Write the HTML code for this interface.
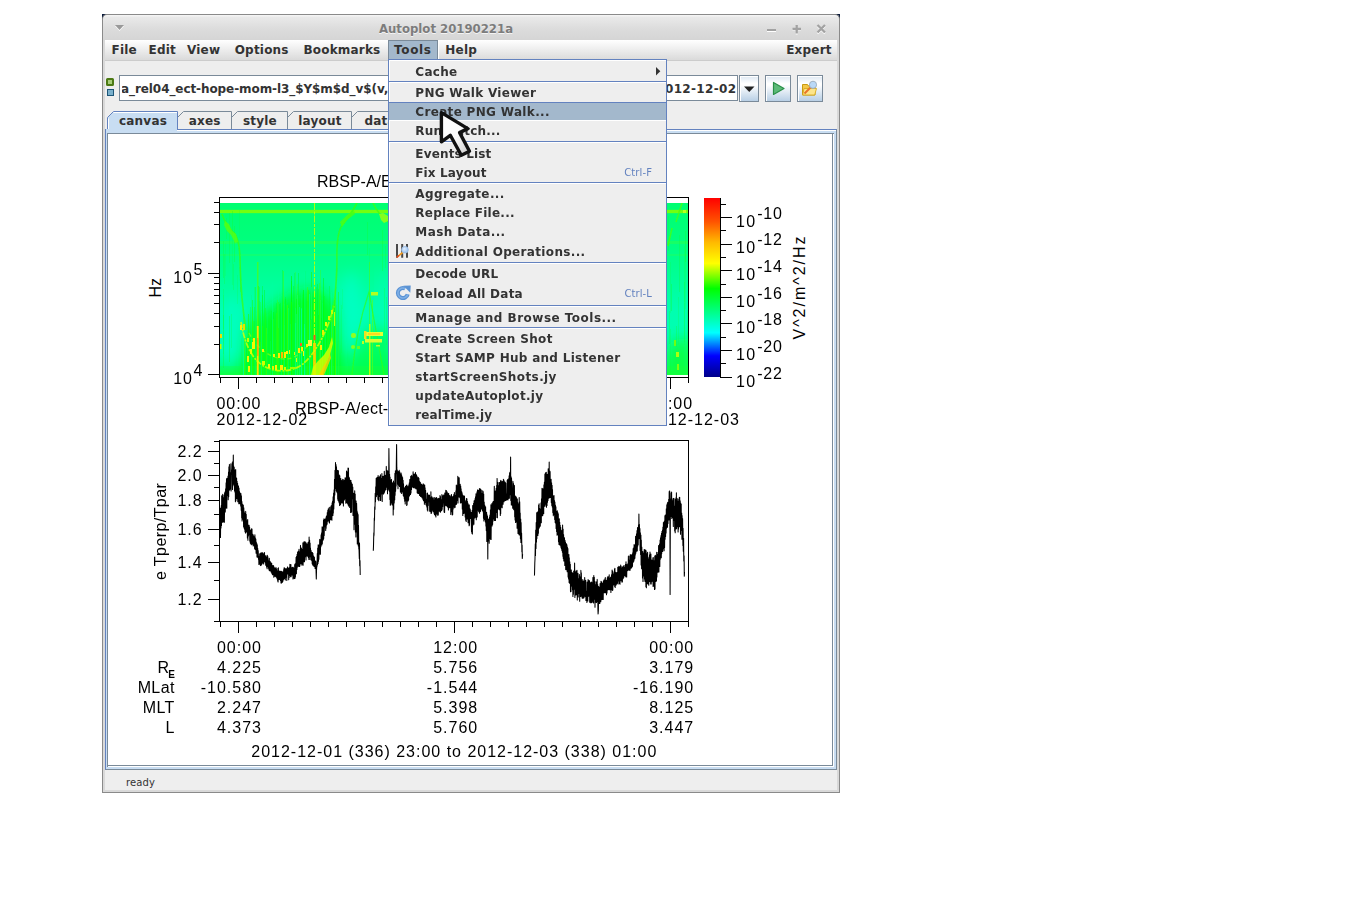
<!DOCTYPE html>
<html lang="en"><head><meta charset="utf-8"><title>Autoplot 20190221a</title>
<style>
*{box-sizing:border-box;margin:0;padding:0}
html,body{width:1345px;height:916px;overflow:hidden;background:#fff}
body{position:relative;font-family:"DejaVu Sans","Liberation Sans",sans-serif;font-size:12px;color:#333}
.a{position:absolute}
.b{font-weight:bold;letter-spacing:.2px;white-space:nowrap;line-height:14px;height:14px}
.p{font-family:"Liberation Sans",sans-serif;font-size:17px;letter-spacing:.42px;color:#000;white-space:nowrap;line-height:20px;height:20px}
.btn{border:1px solid #7a8a99;background:linear-gradient(#dde8f3 0,#fff 30%,#fff 36%,#b8cfe5 100%);box-shadow:inset 1px 1px 0 #fff}
</style></head>
<body>
<div class="a" style="left:102px;top:14px;width:738px;height:779px;background:#8a8a8a;border-radius:5px 5px 0 0"></div>
<div class="a" style="left:103px;top:15px;width:736px;height:777px;background:#d9d9d9;border-radius:3px 3px 0 0"></div>
<svg class="a" style="left:102px;top:14px" width="738" height="5"><path d="M0 0h5l-5 5z M738 0h-5l5 5z" fill="#0b1a3a"/></svg>
<div class="a" style="left:102px;top:14px;width:738px;height:26px;border-radius:5px 5px 0 0;border:1px solid #8a8a8a;border-bottom:0;background:linear-gradient(#f7f7f7 0,#e9e9e9 10%,#dcdcdc 55%,#d5d5d5 100%)"></div>
<div class="a" style="left:103px;top:21px;width:686px;text-align:center;font-family:'DejaVu Sans Condensed','DejaVu Sans',sans-serif;font-stretch:condensed;font-weight:bold;font-size:13px;line-height:16px;color:#7c7c7c;text-shadow:0 1px 0 #f4f4f4;white-space:nowrap">Autoplot 20190221a</div>
<svg class="a" style="left:111.400px;top:20px" width="20" height="16"><path d="M4 6h9l-4.5 5z" fill="#fff"/><path d="M4 5h9l-4.5 5z" fill="#999"/></svg>
<svg class="a" style="left:760px;top:20px" width="72" height="16"><g stroke="#fff" stroke-width="2" fill="none"><path d="M7 11h9"/><path d="M32.500 10h8.500M36.700 6v8.500"/><path d="M57.500 6l7.500 7.500M65 6l-7.500 7.500"/></g><g stroke="#a2a2a2" stroke-width="2" fill="none"><path d="M7 10h9"/><path d="M32.500 9h8.500M36.700 5v8.500" stroke-width="2.300"/><path d="M57.500 5l7.500 7.500M65 5l-7.500 7.500" stroke-width="2.300"/></g></svg>
<div class="a" style="left:105px;top:40px;width:732px;height:750px;background:#eee"></div>
<div class="a" style="left:105px;top:40px;width:732px;height:20px;background:linear-gradient(#fff,#dadada)"></div>
<div class="a" style="left:105px;top:60px;width:732px;height:1px;background:#ccc"></div>
<div class="a" style="left:388px;top:40px;width:50px;height:20px;background:#a3b8cc;border:1px solid #7a8a99;border-bottom:0"></div><div class="a" style="left:438px;top:40px;width:1px;height:19px;background:#fff"></div>
<div class="a b" style="left:111.5px;top:43px">File</div>
<div class="a b" style="left:148.5px;top:43px">Edit</div>
<div class="a b" style="left:187px;top:43px">View</div>
<div class="a b" style="left:234.7px;top:43px">Options</div>
<div class="a b" style="left:303.4px;top:43px">Bookmarks</div>
<div class="a b" style="left:394px;top:43px;letter-spacing:.65px">Tools</div>
<div class="a b" style="left:445.3px;top:43px">Help</div>
<div class="a b" style="left:786.2px;top:43px">Expert</div>
<div class="a" style="left:106px;top:78px;width:8px;height:8px;border-radius:1.500px;border:2px solid #4c7a14;background:#a7cd78"></div>
<div class="a" style="left:107px;top:89px;width:7px;height:7px;border:1px solid #1d5678;background:#7ab0cc"></div>
<div class="a" style="left:119px;top:75px;width:619px;height:26px;border:1px solid #7a8a99;background:#fff"><div class="a" style="left:2px;top:0;width:614px;height:24px;overflow:hidden"><div class="a b" style="left:-1px;top:6px;letter-spacing:-.08px">a_rel04_ect-hope-mom-l3_$Y$m$d_v$(v,</div><div class="a b" style="right:-.5px;top:6px;background:#fff;letter-spacing:.35px">2012-12-02</div></div></div>
<div class="a btn" style="left:739px;top:75px;width:20px;height:27px"><svg class="a" style="left:0;top:0" width="18" height="25"><path d="M4 10.500h10.500l-5.250 5.500z" fill="#222"/></svg></div>
<div class="a btn" style="left:765px;top:75px;width:26px;height:27px"><svg class="a" style="left:0;top:0" width="24" height="25"><path d="M7.500 6.500v12l10.500-6z" fill="#5cba78" stroke="#2a9048" stroke-width="1.200" stroke-linejoin="round"/></svg></div>
<div class="a btn" style="left:797px;top:75px;width:26px;height:27px"><svg class="a" style="left:3px;top:4px" width="18" height="18" viewBox="0 0 18 18"><path d="M1.500 4.500h5l1 1.500h6.500v9h-12.500z" fill="#f3c84a" stroke="#c89a12"/><path d="M3 8.500h12.500l-1.800 6.500h-12z" fill="#fde58a" stroke="#d4a514" stroke-width=".8"/><path d="M3.500 13.500l6-6" stroke="#e8742a" stroke-width="2"/><circle cx="12" cy="4.800" r="3.600" fill="#b9d8f7" stroke="#9ab" stroke-width=".9"/></svg></div>
<svg class="a" style="left:105px;top:108px" width="733" height="30">
<path d="M2.500 21.500V9.500l6-6H72.500V21.500" fill="#c8ddf2"/>
<path d="M72.5 9.500l6-6H126.5V21.500M126.5 9.500l6-6H182.5V21.500M182.5 9.500l6-6H246.5V21.500M246.5 9.500l6-6H300.5V21.500" fill="none" stroke="#7a8a99"/>
<path d="M8.500 4.500h63.500" stroke="#fff" fill="none"/>
<path d="M3.500 10.500v11" stroke="#fff" fill="none"/>
<path d="M2.500 21.500V9.500l6-6H72.500V21.500" fill="none" stroke="#6382bf"/>
</svg>
<div class="a b" style="left:119px;top:114px">canvas</div>
<div class="a b" style="left:188.8px;top:114px">axes</div>
<div class="a b" style="left:243px;top:114px">style</div>
<div class="a b" style="left:298.3px;top:114px">layout</div>
<div class="a b" style="left:364.5px;top:114px">data</div>
<div class="a" style="left:105px;top:129px;width:732px;height:641px;background:#c8ddf2;border:1px solid #7a8a99;border-top-color:#6382bf;border-left-color:#6382bf;box-shadow:inset 0 1px 0 #fff"></div>
<div class="a" style="left:106px;top:129px;width:71px;height:2px;background:#c8ddf2"></div>
<div class="a" style="left:107px;top:133px;width:727px;height:634px;background:#fff;border:1px solid #7a8a99;border-right:0;border-bottom:0"></div>
<div class="a" style="left:107px;top:765px;width:726px;height:1px;background:#7a8a99"></div>
<div class="a" style="left:832px;top:133px;width:1px;height:633px;background:#7a8a99"></div>
<div class="a" style="left:126px;top:777px;font-size:10px;line-height:12px;letter-spacing:.1px">ready</div>
<svg class="a" style="left:0;top:0" width="1345" height="916" viewBox="0 0 1345 916" font-family="'Liberation Sans',sans-serif" font-size="16" fill="#000">
<defs><linearGradient id="sg" x1="0" y1="0" x2="0" y2="1"><stop offset="0" stop-color="#00ff70"/><stop offset=".2" stop-color="#00ff7c"/><stop offset=".42" stop-color="#00ff96"/><stop offset=".62" stop-color="#00ffb0"/><stop offset=".85" stop-color="#00ffb4"/><stop offset=".95" stop-color="#00ff84"/><stop offset="1" stop-color="#10ff48"/></linearGradient><linearGradient id="cb" x1="0" y1="0" x2="0" y2="1"><stop offset="0" stop-color="#ff0000"/><stop offset=".133" stop-color="#ff5400"/><stop offset=".247" stop-color="#ffb900"/><stop offset=".365" stop-color="#ffff00"/><stop offset=".506" stop-color="#00ff00"/><stop offset=".753" stop-color="#00ffff"/><stop offset=".882" stop-color="#0000ff"/><stop offset="1" stop-color="#000089"/></linearGradient><filter id="bl" x="-30%" y="-30%" width="160%" height="160%"><feGaussianBlur stdDeviation="7"/></filter><filter id="b2" x="-30%" y="-30%" width="160%" height="160%"><feGaussianBlur stdDeviation="1.1"/></filter><filter id="b3" x="-30%" y="-30%" width="160%" height="160%"><feGaussianBlur stdDeviation=".6"/></filter><clipPath id="sc"><rect x="220" y="203" width="468" height="172"/></clipPath></defs><rect x="220" y="203" width="468" height="172" fill="url(#sg)"/><g clip-path="url(#sc)"><path d="M240 384L243 340Q250 318 270 308Q300 284 322 292Q338 300 341 326L344 384z" fill="#00ff14" opacity=".88" filter="url(#bl)"/><path d="M350 380L352 340Q368 322 388 330L400 380z" fill="#00ff30" opacity=".6" filter="url(#bl)"/><path d="M420 380L425 320Q480 280 560 300Q620 310 640 380z" fill="#00ff20" opacity=".7" filter="url(#bl)"/><path d="M664 380L668 345Q680 335 692 340V380z" fill="#10ff30" opacity=".8" filter="url(#bl)"/><ellipse cx="231" cy="332" rx="10" ry="34" fill="#00ffc4" opacity=".8" filter="url(#bl)"/><ellipse cx="351" cy="312" rx="11" ry="40" fill="#00ffc8" opacity=".8" filter="url(#bl)"/><ellipse cx="384" cy="300" rx="6" ry="30" fill="#00ffc0" opacity=".6" filter="url(#bl)"/><rect x="220" y="210" width="468" height="3" fill="#86ff00" opacity=".92"/><rect x="220" y="209.500" width="468" height="4" fill="#60ff20" opacity=".35"/><rect x="220" y="241" width="468" height="3" fill="#30ff48" opacity=".45"/><rect x="220" y="254" width="468" height="2" fill="#20ff60" opacity=".45"/><rect x="220" y="366" width="468" height="9" fill="#18ff40" opacity=".35"/><rect x="273" y="307" width="1" height="68" fill="#00ff70" opacity="0.30"/><rect x="320" y="300" width="1" height="75" fill="#00ffa0" opacity="0.45"/><rect x="320" y="270" width="1" height="105" fill="#48ff00" opacity="0.34"/><rect x="272" y="282" width="1" height="93" fill="#00ffa0" opacity="0.41"/><rect x="313" y="300" width="1" height="75" fill="#48ff00" opacity="0.47"/><rect x="262" y="299" width="1" height="76" fill="#00ffa0" opacity="0.30"/><rect x="309" y="294" width="1" height="81" fill="#00ffa0" opacity="0.26"/><rect x="251" y="295" width="1" height="80" fill="#00ff70" opacity="0.26"/><rect x="246" y="337" width="1" height="38" fill="#00ff28" opacity="0.42"/><rect x="335" y="343" width="1" height="32" fill="#48ff00" opacity="0.50"/><rect x="297" y="295" width="1" height="80" fill="#00ffa0" opacity="0.53"/><rect x="299" y="329" width="1" height="46" fill="#20ff00" opacity="0.56"/><rect x="255" y="287" width="1" height="88" fill="#20ff00" opacity="0.42"/><rect x="276" y="313" width="1" height="62" fill="#48ff00" opacity="0.52"/><rect x="281" y="296" width="1" height="79" fill="#00ff70" opacity="0.54"/><rect x="316" y="292" width="1" height="83" fill="#00ff70" opacity="0.45"/><rect x="317" y="284" width="1" height="91" fill="#00ff28" opacity="0.49"/><rect x="246" y="339" width="1" height="36" fill="#00ff28" opacity="0.60"/><rect x="328" y="329" width="1" height="46" fill="#20ff00" opacity="0.49"/><rect x="284" y="304" width="1" height="71" fill="#00ff70" opacity="0.45"/><rect x="334" y="326" width="1" height="49" fill="#20ff00" opacity="0.47"/><rect x="316" y="287" width="1" height="88" fill="#00ff28" opacity="0.29"/><rect x="304" y="324" width="1" height="51" fill="#00ffa0" opacity="0.60"/><rect x="254" y="307" width="1" height="68" fill="#00ff00" opacity="0.39"/><rect x="262" y="286" width="1" height="89" fill="#00ff28" opacity="0.40"/><rect x="296" y="325" width="1" height="50" fill="#00ff00" opacity="0.27"/><rect x="321" y="318" width="1" height="57" fill="#00ff00" opacity="0.38"/><rect x="318" y="291" width="1" height="84" fill="#00ff70" opacity="0.56"/><rect x="278" y="302" width="1" height="73" fill="#20ff00" opacity="0.60"/><rect x="282" y="270" width="1" height="105" fill="#00ff00" opacity="0.29"/><rect x="311" y="272" width="1" height="103" fill="#20ff00" opacity="0.59"/><rect x="280" y="309" width="1" height="66" fill="#00ff28" opacity="0.30"/><rect x="248" y="340" width="1" height="35" fill="#00ff28" opacity="0.36"/><rect x="260" y="342" width="1" height="33" fill="#48ff00" opacity="0.38"/><rect x="309" y="294" width="1" height="81" fill="#00ffa0" opacity="0.55"/><rect x="330" y="320" width="1" height="55" fill="#00ff00" opacity="0.47"/><rect x="307" y="287" width="1" height="88" fill="#48ff00" opacity="0.47"/><rect x="334" y="300" width="1" height="75" fill="#00ff28" opacity="0.40"/><rect x="276" y="303" width="1" height="72" fill="#00ff28" opacity="0.44"/><rect x="244" y="335" width="1" height="40" fill="#48ff00" opacity="0.60"/><rect x="283" y="271" width="1" height="104" fill="#48ff00" opacity="0.47"/><rect x="323" y="278" width="1" height="97" fill="#00ff00" opacity="0.47"/><rect x="285" y="299" width="1" height="76" fill="#00ff28" opacity="0.49"/><rect x="288" y="308" width="1" height="67" fill="#00ffa0" opacity="0.35"/><rect x="305" y="271" width="1" height="104" fill="#00ff70" opacity="0.27"/><rect x="329" y="286" width="1" height="89" fill="#00ff28" opacity="0.34"/><rect x="301" y="289" width="1" height="86" fill="#00ff70" opacity="0.46"/><rect x="265" y="308" width="1" height="67" fill="#20ff00" opacity="0.36"/><rect x="290" y="324" width="1" height="51" fill="#00ff70" opacity="0.34"/><rect x="291" y="276" width="1" height="99" fill="#00ff00" opacity="0.59"/><rect x="330" y="332" width="1" height="43" fill="#20ff00" opacity="0.36"/><rect x="271" y="311" width="1" height="64" fill="#00ff28" opacity="0.33"/><rect x="266" y="328" width="1" height="47" fill="#48ff00" opacity="0.48"/><rect x="255" y="291" width="1" height="84" fill="#00ff70" opacity="0.36"/><rect x="285" y="313" width="1" height="62" fill="#20ff00" opacity="0.40"/><rect x="264" y="290" width="1" height="85" fill="#00ff28" opacity="0.51"/><rect x="270" y="341" width="1" height="34" fill="#00ff70" opacity="0.41"/><rect x="271" y="320" width="1" height="55" fill="#00ff00" opacity="0.26"/><rect x="267" y="305" width="1" height="70" fill="#00ff70" opacity="0.31"/><rect x="278" y="291" width="1" height="84" fill="#00ffa0" opacity="0.28"/><rect x="322" y="292" width="1" height="83" fill="#00ff70" opacity="0.30"/><rect x="280" y="303" width="1" height="72" fill="#00ff28" opacity="0.41"/><rect x="324" y="296" width="1" height="79" fill="#00ff28" opacity="0.40"/><rect x="295" y="272" width="1" height="103" fill="#48ff00" opacity="0.30"/><rect x="243" y="315" width="1" height="60" fill="#00ff70" opacity="0.60"/><rect x="298" y="305" width="1" height="70" fill="#00ffa0" opacity="0.33"/><rect x="338" y="314" width="1" height="61" fill="#00ffa0" opacity="0.51"/><rect x="279" y="304" width="1" height="71" fill="#00ff28" opacity="0.56"/><rect x="251" y="339" width="1" height="36" fill="#00ff70" opacity="0.59"/><rect x="258" y="336" width="1" height="39" fill="#20ff00" opacity="0.27"/><rect x="331" y="317" width="1" height="58" fill="#20ff00" opacity="0.56"/><rect x="298" y="306" width="1" height="69" fill="#00ff00" opacity="0.25"/><rect x="338" y="292" width="1" height="83" fill="#20ff00" opacity="0.43"/><rect x="273" y="312" width="1" height="63" fill="#00ff00" opacity="0.43"/><rect x="295" y="273" width="1" height="102" fill="#00ff70" opacity="0.29"/><rect x="259" y="301" width="1" height="74" fill="#00ff70" opacity="0.42"/><rect x="250" y="307" width="1" height="68" fill="#20ff00" opacity="0.32"/><rect x="311" y="326" width="1" height="49" fill="#00ff00" opacity="0.31"/><rect x="278" y="328" width="1" height="47" fill="#20ff00" opacity="0.54"/><rect x="243" y="316" width="1" height="59" fill="#00ffa0" opacity="0.45"/><rect x="294" y="273" width="1" height="102" fill="#00ff28" opacity="0.34"/><rect x="322" y="303" width="1" height="72" fill="#00ff70" opacity="0.40"/><rect x="303" y="290" width="1" height="85" fill="#00ff00" opacity="0.55"/><rect x="259" y="287" width="1" height="88" fill="#00ff00" opacity="0.27"/><rect x="304" y="272" width="1" height="103" fill="#00ffa0" opacity="0.28"/><rect x="307" y="301" width="1" height="74" fill="#00ff28" opacity="0.30"/><rect x="252" y="307" width="1" height="68" fill="#48ff00" opacity="0.48"/><rect x="318" y="289" width="1" height="86" fill="#00ff28" opacity="0.34"/><rect x="285" y="297" width="1" height="78" fill="#00ff00" opacity="0.29"/><rect x="243" y="330" width="1" height="45" fill="#00ffa0" opacity="0.38"/><rect x="253" y="321" width="1" height="54" fill="#20ff00" opacity="0.27"/><rect x="301" y="308" width="1" height="67" fill="#00ffa0" opacity="0.52"/><rect x="291" y="310" width="1" height="65" fill="#00ff00" opacity="0.47"/><rect x="298" y="273" width="1" height="102" fill="#00ff28" opacity="0.47"/><rect x="332" y="305" width="1" height="70" fill="#48ff00" opacity="0.58"/><rect x="296" y="299" width="1" height="76" fill="#00ff00" opacity="0.34"/><rect x="311" y="287" width="1" height="88" fill="#00ffa0" opacity="0.46"/><rect x="297" y="284" width="1" height="91" fill="#48ff00" opacity="0.30"/><rect x="246" y="344" width="1" height="31" fill="#00ff28" opacity="0.38"/><rect x="314" y="320" width="1" height="55" fill="#00ff28" opacity="0.29"/><rect x="331" y="292" width="1" height="83" fill="#00ffa0" opacity="0.48"/><rect x="310" y="320" width="1" height="55" fill="#48ff00" opacity="0.48"/><rect x="336" y="305" width="1" height="70" fill="#00ff70" opacity="0.44"/><rect x="318" y="315" width="1" height="60" fill="#00ff00" opacity="0.42"/><rect x="273" y="319" width="1" height="56" fill="#48ff00" opacity="0.27"/><rect x="254" y="321" width="1" height="54" fill="#00ff00" opacity="0.48"/><rect x="291" y="281" width="1" height="94" fill="#00ff00" opacity="0.37"/><rect x="258" y="286" width="1" height="89" fill="#00ff00" opacity="0.49"/><rect x="332" y="345" width="1" height="30" fill="#00ff28" opacity="0.45"/><rect x="254" y="287" width="1" height="88" fill="#00ff70" opacity="0.43"/><rect x="334" y="300" width="1" height="75" fill="#00ff00" opacity="0.44"/><rect x="255" y="344" width="1" height="31" fill="#00ff70" opacity="0.27"/><rect x="284" y="325" width="1" height="50" fill="#00ff70" opacity="0.31"/><rect x="252" y="300" width="1" height="75" fill="#20ff00" opacity="0.48"/><rect x="301" y="309" width="1" height="66" fill="#00ffa0" opacity="0.51"/><rect x="293" y="286" width="1" height="89" fill="#00ff28" opacity="0.46"/><rect x="287" y="305" width="1" height="70" fill="#48ff00" opacity="0.59"/><rect x="291" y="302" width="1" height="73" fill="#20ff00" opacity="0.59"/><rect x="295" y="323" width="1" height="52" fill="#00ffa0" opacity="0.59"/><rect x="296" y="314" width="1" height="61" fill="#00ff70" opacity="0.51"/><rect x="329" y="344" width="1" height="31" fill="#00ff70" opacity="0.49"/><rect x="262" y="326" width="1" height="49" fill="#48ff00" opacity="0.56"/><rect x="262" y="295" width="1" height="80" fill="#00ff00" opacity="0.42"/><rect x="304" y="328" width="1" height="47" fill="#00ffa0" opacity="0.43"/><rect x="299" y="307" width="1" height="68" fill="#00ffa0" opacity="0.55"/><rect x="260" y="302" width="1" height="73" fill="#20ff00" opacity="0.30"/><rect x="308" y="290" width="1" height="85" fill="#20ff00" opacity="0.55"/><rect x="311" y="319" width="1" height="56" fill="#00ff28" opacity="0.48"/><rect x="295" y="308" width="1" height="67" fill="#00ff70" opacity="0.45"/><rect x="277" y="326" width="1" height="49" fill="#20ff00" opacity="0.36"/><rect x="277" y="300" width="1" height="75" fill="#48ff00" opacity="0.32"/><rect x="315" y="293" width="1" height="82" fill="#20ff00" opacity="0.36"/><rect x="261" y="311" width="1" height="64" fill="#00ffa0" opacity="0.42"/><rect x="319" y="283" width="1" height="92" fill="#48ff00" opacity="0.45"/><rect x="326" y="320" width="1" height="55" fill="#00ff00" opacity="0.42"/><rect x="335" y="289" width="1" height="86" fill="#48ff00" opacity="0.52"/><rect x="248" y="314" width="1" height="61" fill="#20ff00" opacity="0.56"/><rect x="325" y="330" width="1" height="45" fill="#00ffa0" opacity="0.27"/><rect x="270" y="339" width="1" height="36" fill="#00ff28" opacity="0.33"/><rect x="267" y="334" width="1" height="41" fill="#00ff28" opacity="0.30"/><rect x="385" y="246" width="1" height="22" fill="#10ff30" opacity="0.23"/><rect x="234" y="226" width="1" height="36" fill="#10ff30" opacity="0.36"/><rect x="342" y="289" width="1" height="20" fill="#10ff30" opacity="0.16"/><rect x="367" y="222" width="1" height="33" fill="#10ff30" opacity="0.31"/><rect x="671" y="284" width="1" height="27" fill="#10ff30" opacity="0.37"/><rect x="223" y="315" width="1" height="53" fill="#10ff30" opacity="0.38"/><rect x="678" y="297" width="1" height="48" fill="#10ff30" opacity="0.22"/><rect x="382" y="230" width="1" height="41" fill="#10ff30" opacity="0.32"/><rect x="670" y="329" width="1" height="52" fill="#10ff30" opacity="0.24"/><rect x="685" y="249" width="1" height="60" fill="#10ff30" opacity="0.19"/><rect x="232" y="230" width="1" height="55" fill="#10ff30" opacity="0.19"/><rect x="687" y="310" width="1" height="55" fill="#10ff30" opacity="0.23"/><rect x="369" y="248" width="1" height="24" fill="#10ff30" opacity="0.18"/><rect x="684" y="303" width="1" height="42" fill="#10ff30" opacity="0.17"/><rect x="229" y="213" width="1" height="50" fill="#10ff30" opacity="0.28"/><rect x="384" y="288" width="1" height="45" fill="#10ff30" opacity="0.26"/><rect x="223" y="241" width="1" height="37" fill="#10ff30" opacity="0.30"/><rect x="685" y="231" width="1" height="31" fill="#10ff30" opacity="0.32"/><rect x="679" y="235" width="1" height="57" fill="#10ff30" opacity="0.30"/><rect x="684" y="246" width="1" height="56" fill="#10ff30" opacity="0.19"/><rect x="229" y="316" width="1" height="46" fill="#10ff30" opacity="0.39"/><rect x="684" y="282" width="1" height="60" fill="#10ff30" opacity="0.27"/><rect x="676" y="326" width="1" height="21" fill="#10ff30" opacity="0.30"/><rect x="670" y="262" width="1" height="51" fill="#10ff30" opacity="0.19"/><rect x="241" y="338" width="1" height="33" fill="#10ff30" opacity="0.16"/><rect x="237" y="275" width="1" height="29" fill="#10ff30" opacity="0.18"/><rect x="223" y="295" width="1" height="59" fill="#10ff30" opacity="0.21"/><rect x="223" y="289" width="1" height="40" fill="#10ff30" opacity="0.23"/><rect x="232" y="211" width="1" height="25" fill="#10ff30" opacity="0.33"/><rect x="231" y="314" width="1" height="34" fill="#10ff30" opacity="0.27"/><rect x="224" y="254" width="1" height="30" fill="#10ff30" opacity="0.25"/><rect x="669" y="311" width="1" height="33" fill="#10ff30" opacity="0.31"/><rect x="341" y="305" width="1" height="48" fill="#10ff30" opacity="0.20"/><rect x="386" y="297" width="1" height="48" fill="#10ff30" opacity="0.28"/><rect x="240" y="256" width="1" height="36" fill="#10ff30" opacity="0.35"/><rect x="225" y="243" width="1" height="33" fill="#10ff30" opacity="0.16"/><rect x="239" y="210" width="1" height="28" fill="#10ff30" opacity="0.18"/><rect x="226" y="218" width="1" height="21" fill="#10ff30" opacity="0.25"/><rect x="668" y="216" width="1" height="35" fill="#10ff30" opacity="0.25"/><rect x="233" y="264" width="1" height="26" fill="#10ff30" opacity="0.25"/><path d="M314.500 203V375" stroke="#c4ff00" stroke-width="1" stroke-dasharray="7 1.500 3 1" opacity=".9"/><rect x="313.500" y="335" width="2" height="5" fill="#ff5020" opacity=".9" filter="url(#b3)"/><rect x="313" y="343" width="3" height="32" fill="#ffd000" opacity=".85" filter="url(#b3)"/><rect x="257" y="262" width="1.500" height="64" fill="#50ff10" opacity=".7"/><rect x="256.800" y="326" width="1.900" height="49" fill="#ffe000" filter="url(#b3)"/><rect x="257" y="338" width="1.600" height="18" fill="#ff9800" opacity=".8" filter="url(#b3)"/><rect x="369" y="262" width="1" height="62" fill="#40ff20" opacity=".6"/><rect x="369" y="324" width="1.500" height="51" fill="#c8ff00" opacity=".9"/><rect x="372" y="300" width="1" height="75" fill="#60ff10" opacity=".6"/><g fill="none" filter="url(#b3)"><path d="M241 322C244 340 250 357 262 365S290 372 300 366S326 338 334 306" stroke="#dcff00" stroke-width="1.700" opacity=".8" stroke-dasharray="6 1.500 2 1"/><path d="M249 333Q258 350 272 356T296 356T313 338" stroke="#b0ff00" stroke-width="1.300" opacity=".55" stroke-dasharray="4 3"/><path d="M222 214Q226 226 233 232T240 262Q241 300 246 330" stroke="#38ff10" stroke-width="1.600" opacity=".75"/><path d="M357 203Q350 216 343 224T337 262Q336 300 331 322" stroke="#38ff10" stroke-width="1.600" opacity=".75"/><path d="M373 203Q378 214 388 222" stroke="#40ff10" stroke-width="1.500" opacity=".8"/><path d="M352 375Q356 330 369 292Q376 330 384 375" stroke="#30ff18" stroke-width="1.200" opacity=".7"/><path d="M682 203L676 222M672 228L668 246" stroke="#48ff10" stroke-width="1.500" opacity=".8"/></g><g filter="url(#b3)"><path d="M225 221l4 3l3 7l4 3l2 8l-3 1l-4-8l-4-4l-3-6z" fill="#58ff10" opacity=".8"/><path d="M379 214l4-1l5 3v5l-4 2l-3-3z" fill="#a0ff10" opacity=".8"/><path d="M340 222l8-8l6-3l1 3l-8 6l-5 7z" fill="#50ff10" opacity=".8"/><path d="M311 375l2-8l5-6l6-6l5-8l3-10l1 6l-3 12l-5 12l-4 14z" fill="#d4ff00" opacity=".85"/><path d="M319 375l4-8l5-8l2-6l1 5l-4 10l-3 7z" fill="#ffd000" opacity=".8"/><rect x="365" y="332" width="18" height="4" fill="#e8ff30"/><rect x="368" y="333" width="12" height="2" fill="#ffd820"/><rect x="365" y="339" width="17" height="3.500" fill="#d8ff30"/><rect x="364" y="331" width="2.500" height="8" fill="#f0e020"/><rect x="371" y="292" width="7" height="3.500" fill="#b0ff20"/><rect x="351" y="333" width="5" height="5" rx="2" fill="#90ff20"/><rect x="351" y="345" width="4" height="4" rx="2" fill="#80ff20"/><rect x="357" y="346" width="3" height="3" fill="#60ff20"/><rect x="220" y="334" width="2" height="4" fill="#f0e000"/><rect x="220" y="344" width="1.500" height="5" fill="#c0ff00"/><rect x="683" y="210" width="3" height="3" fill="#b8ff20"/><rect x="676" y="352" width="3" height="5" fill="#b0ff10"/><rect x="674" y="340" width="2" height="6" fill="#70ff10"/><rect x="677" y="364" width="2" height="6" fill="#80ff10"/></g><rect x="240" y="325" width="2" height="5" fill="#fff000"/><rect x="243" y="324" width="2" height="6" fill="#e8e000"/><rect x="247" y="338" width="2" height="4" fill="#c8ff00"/><rect x="252" y="342" width="3" height="7" fill="#f8f800"/><rect x="253" y="338" width="2" height="4" fill="#ffee00"/><rect x="250" y="349" width="2" height="5" fill="#e0ff00"/><rect x="247" y="356" width="2" height="6" fill="#f8f400"/><rect x="248" y="366" width="2" height="6" fill="#f6f600"/><rect x="262" y="349" width="2" height="3" fill="#f8f400"/><rect x="273" y="354" width="2" height="3" fill="#f8f400"/><rect x="278" y="353" width="2" height="5" fill="#ffe800"/><rect x="281" y="352" width="2" height="6" fill="#ffb400"/><rect x="284" y="352" width="2" height="6" fill="#ffe800"/><rect x="286" y="351" width="2" height="3" fill="#f8f400"/><rect x="289" y="350" width="1" height="4" fill="#e8f000"/><rect x="294" y="352" width="1" height="3" fill="#e0f000"/><rect x="268" y="364" width="2" height="4" fill="#f4fc00"/><rect x="272" y="366" width="2" height="3" fill="#e8f000"/><rect x="275" y="365" width="2" height="5" fill="#fff400"/><rect x="280" y="365" width="3" height="5" fill="#ffee00"/><rect x="284" y="367" width="2" height="3" fill="#d0ff00"/><rect x="262" y="361" width="3" height="4" fill="#d0ff00"/><rect x="290" y="367" width="6" height="2" fill="#a0ff00"/><rect x="298" y="348" width="2" height="5" fill="#ffee00"/><rect x="301" y="347" width="2" height="4" fill="#fff400"/><rect x="303" y="351" width="1" height="5" fill="#f8f800"/><rect x="306" y="344" width="2" height="3" fill="#f8f400"/><rect x="308" y="340" width="4" height="6" fill="#f8f840"/><rect x="300" y="343" width="2" height="3" fill="#ff6020"/><rect x="296" y="358" width="1" height="4" fill="#e0ff00"/><rect x="325" y="322" width="2" height="4" fill="#e0ff00"/><rect x="328" y="316" width="2" height="4" fill="#d0ff00"/><rect x="331" y="310" width="2" height="4" fill="#c8ff00"/><rect x="322" y="330" width="2" height="5" fill="#e8f000"/><rect x="334" y="312" width="1" height="14" fill="#c0ff00"/><rect x="320" y="345" width="2" height="5" fill="#f8f400"/><rect x="362" y="341" width="2" height="3" fill="#c0ff20"/><rect x="376" y="345" width="4" height="1.5" fill="#c0ff20"/></g>
<g fill="none" stroke="#000" stroke-width="1" shape-rendering="crispEdges">
<rect x="219.500" y="197.500" width="469" height="180"/>
<rect x="219.500" y="440.500" width="469" height="181"/>
<path d="M208 273.500h11M208 374.500h11M214 202.500h5M214 212.500h5M214 224.500h5M214 242.500h5M214 277.500h5M214 283.500h5M214 289.500h5M214 295.500h5M214 303.500h5M214 313.500h5M214 326.500h5M214 344.500h5M220.500 378v5M238.500 378v11M256.500 378v5M274.500 378v5M292.500 378v5M310.500 378v5M328.500 378v5M346.500 378v5M364.500 378v5M382.500 378v5M400.500 378v5M418.500 378v5M436.500 378v5M454.500 378v11M472.500 378v5M490.500 378v5M508.500 378v5M526.500 378v5M544.500 378v5M562.500 378v5M580.500 378v5M598.500 378v5M616.500 378v5M634.500 378v5M652.500 378v5M670.500 378v11M688.500 378v5M220.500 622v5M238.500 622v11M256.500 622v5M274.500 622v5M292.500 622v5M310.500 622v5M328.500 622v5M346.500 622v5M364.500 622v5M382.500 622v5M400.500 622v5M418.500 622v5M436.500 622v5M454.500 622v11M472.500 622v5M490.500 622v5M508.500 622v5M526.500 622v5M544.500 622v5M562.500 622v5M580.500 622v5M598.500 622v5M616.500 622v5M634.500 622v5M652.500 622v5M670.500 622v11M688.500 622v5M721 217.500h11M721 244.500h11M721 270.500h11M721 297.500h11M721 323.500h11M721 350.500h11M721 377.500h11M721 204.500h5M721 230.500h5M721 257.500h5M721 284.500h5M721 310.500h5M721 337.500h5M721 363.500h5M208 451.500h11M208 475.500h11M208 500.500h11M208 529.500h11M208 562.500h11M208 599.500h11M214 441.500h5M214 463.500h5M214 487.500h5M214 514.500h5M214 545.500h5M214 580.500h5M214 621.500h5M720.500 198V378"/>
</g>
<rect x="704" y="198" width="16" height="179" fill="url(#cb)"/>
<g fill="none" stroke="#000" stroke-width="1.050" stroke-linejoin="round"><polyline points="220.3,507.7 220.5,537.5 220.8,508.1 221.0,528.0 221.3,505.5 221.5,525.6 221.7,495.8 222.0,508.3 222.2,497.9 222.5,522.2 222.7,494.2 222.9,519.4 223.2,512.5 223.4,522.0 223.7,497.6 223.9,519.6 224.1,495.0 224.4,522.2 224.6,492.7 224.9,512.4 225.1,491.7 225.3,511.4 225.6,488.7 225.8,507.9 226.1,482.8 226.3,503.2 226.5,478.7 226.8,508.3 227.0,478.2 227.3,495.5 227.5,478.7 227.7,493.5 228.0,476.1 228.2,499.7 228.5,472.0 228.7,496.8 228.9,466.8 229.2,489.1 229.4,464.4 229.7,490.1 229.9,473.2 230.1,489.1 230.4,472.5 230.6,481.9 230.9,463.7 231.1,491.0 231.3,475.3 231.6,472.6 231.8,470.0 232.1,473.6 232.3,462.5 232.5,489.4 232.8,461.6 233.0,484.0 233.3,455.0 233.5,484.2 233.7,465.9 234.0,485.8 234.2,467.2 234.5,490.8 234.7,470.0 234.9,491.9 235.2,471.1 235.4,501.8 235.7,469.6 235.9,500.7 236.1,493.9 236.4,498.4 236.6,478.0 236.9,497.1 237.1,481.3 237.3,498.7 237.6,483.3 237.8,501.8 238.1,486.2 238.3,501.1 238.5,485.9 238.8,503.8 239.0,487.9 239.3,502.1 239.5,491.4 239.7,503.5 240.0,492.7 240.2,503.9 240.5,494.8 240.7,506.1 240.9,493.5 241.2,510.3 241.4,495.7 241.7,517.8 241.9,501.6 242.1,520.9 242.4,504.0 242.6,516.9 242.9,504.9 243.1,519.3 243.3,505.1 243.6,526.7 243.8,507.8 244.1,527.9 244.3,511.7 244.5,529.1 244.8,513.2 245.0,531.7 245.3,513.6 245.5,533.1 245.7,511.4 246.0,531.6 246.2,514.3 246.5,531.3 246.7,520.5 246.9,532.4 247.2,522.2 247.4,537.9 247.7,519.5 247.9,540.3 248.1,524.8 248.4,536.1 248.6,525.7 248.9,530.1 249.1,525.3 249.3,534.8 249.6,526.9 249.8,541.1 250.1,530.0 250.3,543.1 250.5,530.1 250.8,543.9 251.0,535.6 251.3,533.4 251.5,528.9 251.7,544.8 252.0,528.9 252.2,543.7 252.5,534.3 252.7,543.9 252.9,534.2 253.2,546.0 253.4,535.6 253.7,541.7 253.9,536.5 254.1,545.3 254.4,537.5 254.6,548.5 254.9,534.8 255.1,549.6 255.3,537.8 255.6,541.4 255.8,538.9 256.1,553.3 256.3,541.9 256.5,553.1 256.8,543.5 257.0,556.9 257.3,544.7 257.5,557.3 257.7,548.2 258.0,556.0 258.2,550.4 258.5,559.3 258.7,557.0 258.9,564.5 259.2,556.3 259.4,564.1 259.7,553.7 259.9,564.3 260.1,561.0 260.4,565.5 260.6,553.2 260.9,565.6 261.1,552.9 261.3,565.0 261.6,558.2 261.8,564.2 262.1,552.4 262.3,563.3 262.5,552.9 262.8,563.0 263.0,553.1 263.3,560.0 263.5,554.3 263.7,564.0 264.0,553.9 264.2,561.3 264.5,552.5 264.7,561.4 264.9,559.4 265.2,562.5 265.4,555.7 265.7,565.3 265.9,555.8 266.1,561.8 266.4,556.9 266.6,567.1 266.9,557.5 267.1,568.8 267.3,555.2 267.6,566.4 267.8,556.5 268.1,561.6 268.3,560.7 268.5,568.3 268.8,565.7 269.0,569.9 269.3,558.2 269.5,570.7 269.7,561.3 270.0,567.4 270.2,561.4 270.5,570.4 270.7,562.4 270.9,571.7 271.2,563.1 271.4,572.2 271.7,563.2 271.9,573.4 272.1,565.6 272.4,574.7 272.6,565.7 272.9,573.9 273.1,565.6 273.3,574.4 273.6,565.7 273.8,577.3 274.1,567.0 274.3,576.6 274.5,567.9 274.8,575.5 275.0,568.3 275.3,576.0 275.5,574.8 275.7,576.7 276.0,567.4 276.2,576.8 276.5,568.7 276.7,577.8 276.9,573.5 277.2,579.0 277.4,570.8 277.7,581.1 277.9,568.4 278.1,582.0 278.4,567.8 278.6,579.3 278.9,573.0 279.1,579.6 279.3,571.1 279.6,578.6 279.8,575.5 280.1,579.7 280.3,571.2 280.5,580.6 280.8,571.4 281.0,583.0 281.3,571.9 281.5,583.1 281.7,571.3 282.0,580.7 282.2,571.9 282.5,582.3 282.7,572.1 282.9,581.3 283.2,571.7 283.4,579.8 283.7,569.6 283.9,579.0 284.1,567.8 284.4,578.5 284.6,567.9 284.9,575.5 285.1,569.0 285.3,579.9 285.6,568.8 285.8,572.4 286.1,568.4 286.3,577.3 286.5,569.5 286.8,580.4 287.0,568.9 287.3,570.4 287.5,566.9 287.7,573.9 288.0,567.8 288.2,573.6 288.5,568.9 288.7,579.8 288.9,568.1 289.2,577.4 289.4,567.6 289.7,575.2 289.9,564.2 290.1,575.4 290.4,565.1 290.6,576.8 290.9,564.5 291.1,576.7 291.3,567.6 291.6,574.2 291.8,568.3 292.1,575.1 292.3,567.4 292.5,572.7 292.8,567.2 293.0,578.9 293.3,567.2 293.5,578.3 293.7,568.2 294.0,578.3 294.2,568.3 294.5,578.6 294.7,564.6 294.9,578.4 295.2,563.7 295.4,576.9 295.7,564.9 295.9,565.7 296.1,557.2 296.4,573.8 296.6,556.2 296.9,569.5 297.1,554.4 297.3,567.2 297.6,552.0 297.8,565.9 298.1,551.5 298.3,565.3 298.5,551.1 298.8,566.4 299.0,549.2 299.3,556.4 299.5,551.7 299.7,566.5 300.0,551.7 300.2,563.5 300.5,545.4 300.7,555.8 300.9,549.1 301.2,565.1 301.4,548.1 301.7,563.4 301.9,549.9 302.1,563.2 302.4,549.3 302.6,565.0 302.9,542.9 303.1,565.3 303.3,554.3 303.6,559.6 303.8,541.9 304.1,561.7 304.3,541.7 304.5,561.8 304.8,542.0 305.0,556.8 305.3,541.9 305.5,556.1 305.7,543.7 306.0,560.0 306.2,542.9 306.5,555.9 306.7,544.1 306.9,555.9 307.2,544.1 307.4,556.3 307.7,550.8 307.9,546.7 308.1,542.3 308.4,557.6 308.6,542.0 308.9,559.5 309.1,537.1 309.3,559.5 309.6,539.9 309.8,555.7 310.1,543.0 310.3,556.8 310.5,548.0 310.8,559.8 311.0,550.3 311.3,556.6 311.5,551.9 311.7,560.6 312.0,553.0 312.2,563.8 312.5,552.5 312.7,565.1 312.9,553.3 313.2,565.1 313.4,555.8 313.7,565.7 313.9,556.4 314.1,566.4 314.4,557.2 314.6,563.2 314.9,560.2 315.1,568.5 315.3,561.3 315.6,568.2 315.8,561.6 316.1,572.7 316.3,579.0 316.5,570.7 316.8,565.8 317.0,566.5 317.3,553.6 317.5,564.7 317.7,548.0 318.0,563.5 318.2,544.7 318.5,561.2 318.7,546.7 318.9,559.2 319.2,545.0 319.4,554.2 319.7,539.4 319.9,552.6 320.1,541.2 320.4,554.3 320.6,539.5 320.9,546.7 321.1,534.9 321.3,544.9 321.6,532.9 321.8,544.9 322.1,526.9 322.3,543.7 322.5,538.6 322.8,539.3 323.0,526.7 323.3,540.0 323.5,520.0 323.7,538.5 324.0,518.7 324.2,535.5 324.5,519.2 324.7,523.7 324.9,522.9 325.2,526.8 325.4,519.1 325.7,530.5 325.9,517.7 326.1,528.3 326.4,516.0 326.6,525.1 326.9,521.9 327.1,524.2 327.3,512.5 327.6,521.2 327.8,510.4 328.1,514.1 328.3,508.7 328.5,520.7 328.8,509.3 329.0,522.1 329.3,507.2 329.5,522.9 329.7,510.8 330.0,519.4 330.2,512.9 330.5,519.8 330.7,506.9 330.9,519.4 331.2,505.7 331.4,519.5 331.7,505.6 331.9,520.3 332.1,502.9 332.4,505.1 332.6,501.0 332.9,515.6 333.1,496.7 333.3,512.9 333.6,493.0 333.8,509.0 334.1,489.8 334.3,502.8 334.5,479.4 334.8,494.9 335.0,470.4 335.3,487.8 335.5,462.5 335.7,488.4 336.0,464.5 336.2,490.7 336.5,466.8 336.7,491.7 336.9,470.3 337.2,492.8 337.4,473.4 337.7,499.0 337.9,470.2 338.1,500.6 338.4,470.8 338.6,501.1 338.9,477.2 339.1,502.7 339.3,475.0 339.6,505.6 339.8,475.8 340.1,491.9 340.3,479.1 340.5,504.7 340.8,478.6 341.0,503.6 341.3,481.0 341.5,501.3 341.7,480.5 342.0,502.4 342.2,481.4 342.5,502.9 342.7,479.3 342.9,501.0 343.2,479.5 343.4,505.9 343.7,488.7 343.9,488.8 344.1,480.5 344.4,500.0 344.6,480.0 344.9,498.0 345.1,477.7 345.3,498.7 345.6,478.6 345.8,503.3 346.1,477.7 346.3,502.7 346.5,471.0 346.8,499.9 347.0,471.8 347.3,503.0 347.5,481.2 347.7,503.8 348.0,468.0 348.2,504.9 348.5,468.3 348.7,506.1 348.9,477.1 349.2,498.8 349.4,477.8 349.7,507.4 349.9,480.1 350.1,507.6 350.4,481.8 350.6,512.6 350.9,480.2 351.1,512.4 351.3,482.3 351.6,511.8 351.8,483.5 352.1,496.8 352.3,484.3 352.5,498.8 352.8,487.1 353.0,515.6 353.3,505.2 353.5,507.3 353.7,493.3 354.0,529.7 354.2,510.0 354.5,521.7 354.7,490.8 354.9,524.2 355.2,493.9 355.4,531.9 355.7,503.4 355.9,536.9 356.1,500.9 356.4,532.1 356.6,503.2 356.9,515.3 357.1,510.9 357.3,544.0 357.6,512.8 357.8,541.6 358.1,514.6 358.3,545.9 358.5,525.2 358.8,549.1 359.0,548.3 359.3,558.4 359.5,543.0 359.7,565.8 360.0,560.4 360.2,575.0"/><polyline points="373.3,550.8 373.5,546.1 373.8,532.7 374.0,535.9 374.3,518.0 374.5,520.5 374.7,506.9 375.0,509.4 375.2,493.4 375.5,501.7 375.7,486.7 375.9,496.0 376.2,478.2 376.4,496.6 376.7,478.9 376.9,494.7 377.1,477.3 377.4,492.3 377.6,477.7 377.9,499.3 378.1,475.6 378.3,499.7 378.6,478.2 378.8,500.7 379.1,477.1 379.3,496.4 379.5,479.3 379.8,495.7 380.0,476.1 380.3,500.5 380.5,474.8 380.7,500.4 381.0,479.9 381.2,493.9 381.5,478.4 381.7,489.0 381.9,473.5 382.2,501.4 382.4,477.9 382.7,493.7 382.9,476.4 383.1,493.5 383.4,476.4 383.6,494.1 383.9,476.1 384.1,493.0 384.3,471.2 384.6,491.9 384.8,476.2 385.1,490.6 385.3,475.2 385.5,489.3 385.8,483.5 386.0,489.5 386.3,466.4 386.5,487.2 386.7,474.8 387.0,485.4 387.2,470.4 387.5,493.7 387.7,471.1 387.9,490.5 388.2,477.6 388.4,489.2 388.7,478.6 388.9,448.5 389.1,465.1 389.4,491.2 389.6,474.3 389.9,499.4 390.1,477.0 390.3,505.2 390.6,479.7 390.8,504.6 391.1,493.4 391.3,501.3 391.5,479.4 391.8,502.9 392.0,482.5 392.3,505.0 392.5,491.3 392.7,492.7 393.0,482.7 393.2,515.0 393.5,481.1 393.7,509.3 393.9,482.7 394.2,502.9 394.4,495.9 394.7,500.0 394.9,473.4 395.1,495.2 395.4,470.7 395.6,491.3 395.9,481.4 396.1,485.9 396.3,466.7 396.6,444.5 396.8,467.9 397.1,473.2 397.3,469.9 397.5,484.2 397.8,471.5 398.0,488.7 398.3,472.5 398.5,485.2 398.7,471.2 399.0,479.3 399.2,470.3 399.5,486.5 399.7,471.7 399.9,478.2 400.2,473.8 400.4,491.9 400.7,475.0 400.9,492.2 401.1,472.9 401.4,493.5 401.6,474.8 401.9,489.4 402.1,476.5 402.3,491.5 402.6,477.6 402.8,493.0 403.1,480.2 403.3,495.5 403.5,483.8 403.8,496.4 404.0,488.1 404.3,498.7 404.5,490.2 404.7,501.2 405.0,487.2 405.2,504.0 405.5,486.2 405.7,500.7 405.9,488.7 406.2,500.4 406.4,485.4 406.7,505.4 406.9,485.0 407.1,504.8 407.4,487.6 407.6,500.2 407.9,486.6 408.1,500.9 408.3,488.1 408.6,499.9 408.8,484.9 409.1,496.2 409.3,482.9 409.5,495.7 409.8,479.6 410.0,486.6 410.3,479.2 410.5,494.6 410.7,476.3 411.0,493.1 411.2,476.6 411.5,489.4 411.7,475.3 411.9,487.4 412.2,476.4 412.4,486.8 412.7,483.2 412.9,486.8 413.1,471.7 413.4,487.7 413.6,473.9 413.9,485.9 414.1,474.8 414.3,487.1 414.6,474.0 414.8,488.0 415.1,474.9 415.3,481.0 415.5,472.5 415.8,488.7 416.0,475.0 416.3,488.6 416.5,474.7 416.7,489.0 417.0,476.1 417.2,492.8 417.5,477.4 417.7,493.2 417.9,481.3 418.2,493.4 418.4,477.4 418.7,493.1 418.9,478.2 419.1,493.8 419.4,481.0 419.6,495.4 419.9,482.4 420.1,494.5 420.3,482.2 420.6,496.4 420.8,483.8 421.1,490.4 421.3,484.5 421.5,496.8 421.8,484.2 422.0,497.7 422.3,485.5 422.5,498.1 422.7,485.4 423.0,499.6 423.2,483.8 423.5,500.8 423.7,484.4 423.9,500.4 424.2,484.9 424.4,504.2 424.7,485.0 424.9,501.7 425.1,487.7 425.4,502.5 425.6,490.3 425.9,504.6 426.1,500.0 426.3,505.3 426.6,499.6 426.8,507.0 427.1,493.2 427.3,510.0 427.5,493.0 427.8,511.1 428.0,494.9 428.3,505.5 428.5,495.9 428.7,499.1 429.0,494.9 429.2,501.8 429.5,495.2 429.7,511.3 429.9,497.4 430.2,511.2 430.4,506.0 430.7,511.6 430.9,491.8 431.1,513.6 431.4,497.3 431.6,512.9 431.9,496.8 432.1,510.2 432.3,498.6 432.6,510.2 432.8,498.0 433.1,511.6 433.3,497.8 433.5,510.9 433.8,499.8 434.0,513.2 434.3,507.6 434.5,514.8 434.7,497.5 435.0,514.1 435.2,498.5 435.5,515.7 435.7,498.2 435.9,517.0 436.2,497.6 436.4,511.8 436.7,497.8 436.9,514.1 437.1,498.2 437.4,514.3 437.6,506.6 437.9,515.5 438.1,499.0 438.3,514.5 438.6,498.4 438.8,511.1 439.1,498.4 439.3,511.1 439.5,507.0 439.8,511.4 440.0,495.5 440.3,512.2 440.5,496.6 440.7,511.8 441.0,499.8 441.2,509.1 441.5,499.5 441.7,510.4 441.9,494.5 442.2,509.3 442.4,495.5 442.7,506.6 442.9,503.5 443.1,498.6 443.4,495.5 443.6,500.8 443.9,494.9 444.1,512.0 444.3,495.5 444.6,512.4 444.8,493.0 445.1,505.2 445.3,493.5 445.5,504.1 445.8,490.3 446.0,505.7 446.3,490.5 446.5,497.5 446.7,492.5 447.0,506.1 447.2,491.9 447.5,506.8 447.7,493.6 447.9,507.3 448.2,493.9 448.4,510.0 448.7,493.4 448.9,507.6 449.1,497.0 449.4,507.8 449.6,495.5 449.9,507.6 450.1,496.4 450.3,505.2 450.6,499.6 450.8,514.4 451.1,495.1 451.3,507.8 451.5,494.5 451.8,511.7 452.0,501.7 452.3,514.9 452.5,496.8 452.7,514.6 453.0,496.6 453.2,509.0 453.5,495.9 453.7,507.0 453.9,494.2 454.2,506.3 454.4,492.6 454.7,507.8 454.9,495.3 455.1,507.5 455.4,500.0 455.6,500.8 455.9,490.8 456.1,504.5 456.3,485.1 456.6,504.1 456.8,486.6 457.1,500.6 457.3,485.6 457.5,499.5 457.8,476.3 458.0,502.9 458.3,477.4 458.5,497.1 458.7,477.8 459.0,496.9 459.2,477.8 459.5,496.2 459.7,489.9 459.9,497.7 460.2,484.2 460.4,502.9 460.7,486.0 460.9,501.7 461.1,488.8 461.4,502.7 461.6,491.4 461.9,494.1 462.1,492.7 462.3,508.9 462.6,494.7 462.8,515.5 463.1,496.9 463.3,511.9 463.5,495.8 463.8,513.4 464.0,506.4 464.3,512.0 464.5,496.1 464.7,513.0 465.0,500.3 465.2,516.9 465.5,501.6 465.7,520.2 465.9,504.4 466.2,521.4 466.4,498.6 466.7,518.9 466.9,498.8 467.1,519.0 467.4,501.2 467.6,518.6 467.9,503.1 468.1,522.7 468.3,506.0 468.6,522.4 468.8,504.8 469.1,525.7 469.3,504.9 469.5,525.1 469.8,508.6 470.0,513.9 470.3,509.6 470.5,518.5 470.7,512.1 471.0,517.0 471.2,515.6 471.5,531.5 471.7,512.2 471.9,533.3 472.2,510.3 472.4,533.9 472.7,505.6 472.9,525.3 473.1,506.1 473.4,524.1 473.6,503.2 473.9,524.2 474.1,500.7 474.3,508.9 474.6,500.5 474.8,517.9 475.1,498.6 475.3,517.3 475.5,496.7 475.8,502.8 476.0,493.8 476.3,519.7 476.5,504.1 476.7,517.6 477.0,491.8 477.2,516.8 477.5,489.9 477.7,496.1 477.9,491.9 478.2,510.2 478.4,490.3 478.7,511.7 478.9,490.6 479.1,511.7 479.4,488.7 479.6,513.3 479.9,488.6 480.1,511.4 480.3,494.2 480.6,511.2 480.8,489.2 481.1,500.8 481.3,490.3 481.5,508.9 481.8,493.5 482.0,506.9 482.3,493.2 482.5,510.4 482.7,490.8 483.0,511.7 483.2,491.6 483.5,518.2 483.7,493.9 483.9,520.9 484.2,502.0 484.4,519.6 484.7,504.9 484.9,518.1 485.1,513.9 485.4,522.0 485.6,506.7 485.9,526.1 486.1,515.7 486.3,530.6 486.6,512.2 486.8,541.4 487.1,514.8 487.3,521.5 487.5,516.3 487.8,559.0 488.0,521.4 488.3,541.1 488.5,519.1 488.7,540.2 489.0,519.5 489.2,543.3 489.5,517.0 489.7,538.5 489.9,515.1 490.2,536.5 490.4,509.7 490.7,539.6 490.9,504.7 491.1,539.5 491.4,506.5 491.6,524.3 491.9,503.6 492.1,525.9 492.3,520.7 492.6,524.4 492.8,502.1 493.1,520.9 493.3,501.5 493.5,519.0 493.8,501.4 494.0,517.7 494.3,486.3 494.5,520.5 494.7,494.4 495.0,519.8 495.2,491.0 495.5,520.6 495.7,491.4 495.9,501.1 496.2,488.2 496.4,512.4 496.7,485.4 496.9,517.6 497.1,478.4 497.4,517.7 497.6,485.7 497.9,508.1 498.1,482.4 498.3,509.0 498.6,485.5 498.8,507.0 499.1,485.6 499.3,509.8 499.5,482.5 499.8,500.5 500.0,482.3 500.3,515.6 500.5,480.9 500.7,513.8 501.0,480.4 501.2,503.8 501.5,481.5 501.7,507.2 501.9,483.2 502.2,507.7 502.4,481.4 502.7,503.3 502.9,482.3 503.1,504.3 503.4,479.3 503.6,499.5 503.9,480.1 504.1,501.7 504.3,485.1 504.6,497.9 504.8,481.7 505.1,500.5 505.3,482.3 505.5,500.6 505.8,483.2 506.0,500.5 506.3,493.7 506.5,499.9 506.7,495.2 507.0,499.0 507.2,480.4 507.5,499.5 507.7,479.4 507.9,499.9 508.2,479.9 508.4,498.7 508.7,478.5 508.9,497.7 509.1,475.7 509.4,498.3 509.6,472.8 509.9,494.5 510.1,472.1 510.3,494.8 510.6,457.0 510.8,500.4 511.1,476.7 511.3,504.9 511.5,478.0 511.8,484.9 512.0,494.6 512.3,505.2 512.5,492.7 512.7,508.2 513.0,481.4 513.2,504.6 513.5,483.5 513.7,509.5 513.9,489.8 514.2,509.9 514.4,485.4 514.7,516.8 514.9,502.3 515.1,520.0 515.4,496.0 515.6,522.4 515.9,508.7 516.1,519.2 516.3,497.0 516.6,522.1 516.8,498.5 517.1,528.2 517.3,498.9 517.5,505.6 517.8,502.6 518.0,533.4 518.3,503.8 518.5,532.6 518.7,506.5 519.0,534.7 519.2,497.6 519.5,534.9 519.7,501.7 519.9,514.3 520.2,513.1 520.4,538.7 520.7,519.0 520.9,542.6 521.1,522.4 521.4,540.4 521.6,533.0 521.9,551.8 522.1,545.1 522.3,558.4 522.6,554.2"/><polyline points="534.3,575.5 534.5,575.0 534.8,562.7 535.0,559.0 535.3,543.9 535.5,555.6 535.7,529.9 536.0,548.5 536.2,522.5 536.5,541.9 536.7,512.7 536.9,538.5 537.2,512.5 537.4,515.2 537.7,511.9 537.9,535.6 538.1,512.0 538.4,533.2 538.6,505.1 538.9,514.1 539.1,503.8 539.3,527.9 539.6,508.2 539.8,526.4 540.1,509.1 540.3,525.9 540.5,514.5 540.8,522.7 541.0,502.8 541.3,522.7 541.5,498.7 541.7,515.8 542.0,488.3 542.2,513.4 542.5,495.3 542.7,515.8 542.9,488.8 543.2,512.6 543.4,488.8 543.7,513.7 543.9,484.9 544.1,504.7 544.4,482.1 544.6,506.1 544.9,474.2 545.1,506.1 545.3,473.2 545.6,504.2 545.8,472.5 546.1,498.3 546.3,472.2 546.5,507.2 546.8,478.1 547.0,505.5 547.3,474.4 547.5,502.3 547.7,474.2 548.0,500.4 548.2,468.7 548.5,494.4 548.7,469.9 548.9,498.1 549.2,462.0 549.4,497.7 549.7,471.0 549.9,496.6 550.1,471.4 550.4,497.4 550.6,491.4 550.9,494.3 551.1,479.2 551.3,502.6 551.6,482.8 551.8,505.4 552.1,485.3 552.3,506.9 552.5,489.6 552.8,512.6 553.0,495.7 553.3,515.7 553.5,499.1 553.7,514.6 554.0,495.5 554.2,514.4 554.5,500.5 554.7,519.4 554.9,502.0 555.2,522.4 555.4,504.9 555.7,523.3 555.9,506.8 556.1,528.5 556.4,511.1 556.6,531.6 556.9,521.3 557.1,535.2 557.3,510.8 557.6,520.8 557.8,512.4 558.1,534.5 558.3,513.8 558.5,541.8 558.8,521.7 559.0,544.6 559.3,518.7 559.5,543.3 559.7,522.3 560.0,545.3 560.2,525.2 560.5,543.8 560.7,527.3 560.9,547.2 561.2,530.0 561.4,548.8 561.7,530.6 561.9,550.5 562.1,532.1 562.4,552.2 562.6,525.0 562.9,556.2 563.1,528.9 563.3,558.6 563.6,534.5 563.8,561.0 564.1,537.3 564.3,560.9 564.5,537.9 564.8,565.4 565.0,540.2 565.3,561.1 565.5,542.1 565.7,569.5 566.0,544.3 566.2,569.8 566.5,543.8 566.7,569.3 566.9,544.8 567.2,571.7 567.4,546.9 567.7,563.4 567.9,548.4 568.1,577.0 568.4,555.7 568.6,579.0 568.9,554.6 569.1,582.4 569.3,557.7 569.6,583.2 569.8,561.7 570.1,579.8 570.3,564.3 570.5,591.8 570.8,571.1 571.0,591.5 571.3,569.9 571.5,586.1 571.7,581.2 572.0,586.1 572.2,572.5 572.5,589.7 572.7,573.6 572.9,596.5 573.2,573.4 573.4,594.2 573.7,571.0 573.9,589.3 574.1,571.7 574.4,589.0 574.6,563.1 574.9,597.4 575.1,577.8 575.3,595.1 575.6,571.7 575.8,594.9 576.1,570.9 576.3,594.6 576.5,571.7 576.8,594.8 577.0,570.2 577.3,600.0 577.5,577.9 577.7,595.1 578.0,573.3 578.2,597.1 578.5,578.4 578.7,593.4 578.9,579.1 579.2,592.5 579.4,574.6 579.7,601.2 579.9,576.7 580.1,595.1 580.4,576.7 580.6,596.4 580.9,570.4 581.1,596.3 581.3,572.8 581.6,587.7 581.8,581.0 582.1,597.9 582.3,581.7 582.5,587.0 582.8,579.6 583.0,598.6 583.3,581.5 583.5,597.5 583.7,581.1 584.0,597.7 584.2,587.1 584.5,594.6 584.7,577.6 584.9,596.1 585.2,580.9 585.4,596.4 585.7,580.2 585.9,600.6 586.1,594.4 586.4,599.0 586.6,591.0 586.9,602.4 587.1,582.1 587.3,599.1 587.6,583.6 587.8,601.0 588.1,579.6 588.3,596.6 588.5,590.0 588.8,596.0 589.0,580.5 589.3,587.1 589.5,580.7 589.7,602.2 590.0,584.4 590.2,600.7 590.5,582.7 590.7,602.7 590.9,582.3 591.2,602.8 591.4,582.1 591.7,602.4 591.9,582.4 592.1,590.0 592.4,583.0 592.6,601.2 592.9,577.5 593.1,602.4 593.3,594.1 593.6,603.0 593.8,575.4 594.1,599.2 594.3,577.2 594.5,596.1 594.8,581.2 595.0,607.2 595.3,584.5 595.5,601.9 595.7,584.5 596.0,602.3 596.2,581.9 596.5,602.6 596.7,581.8 596.9,601.3 597.2,579.4 597.4,601.6 597.7,584.6 597.9,608.7 598.1,614.0 598.4,609.6 598.6,586.6 598.9,603.5 599.1,586.9 599.3,603.3 599.6,587.1 599.8,603.4 600.1,583.6 600.3,587.1 600.5,583.6 600.8,601.7 601.0,581.3 601.3,597.9 601.5,581.8 601.7,599.6 602.0,583.0 602.2,598.7 602.5,583.0 602.7,599.5 602.9,593.3 603.2,599.5 603.4,581.1 603.7,587.5 603.9,580.0 604.1,592.7 604.4,582.4 604.6,592.1 604.9,578.8 605.1,592.8 605.3,577.5 605.6,592.8 605.8,581.0 606.1,592.1 606.3,580.3 606.5,594.8 606.8,581.6 607.0,593.1 607.3,577.7 607.5,590.0 607.7,576.7 608.0,589.5 608.2,577.4 608.5,586.6 608.7,576.5 608.9,589.8 609.2,574.8 609.4,589.3 609.7,577.9 609.9,589.7 610.1,581.4 610.4,589.2 610.6,577.3 610.9,592.4 611.1,576.8 611.3,579.6 611.6,574.5 611.8,589.5 612.1,570.0 612.3,590.6 612.5,571.1 612.8,590.1 613.0,577.4 613.3,585.2 613.5,573.9 613.7,584.6 614.0,571.9 614.2,584.3 614.5,569.1 614.7,586.5 614.9,568.2 615.2,587.4 615.4,572.1 615.7,575.8 615.9,572.8 616.1,585.1 616.4,572.8 616.6,584.1 616.9,572.6 617.1,583.2 617.3,574.7 617.6,582.4 617.8,567.3 618.1,584.1 618.3,567.9 618.5,574.9 618.8,566.2 619.0,581.0 619.3,567.2 619.5,583.5 619.7,566.9 620.0,584.3 620.2,566.6 620.5,580.5 620.7,565.0 620.9,580.8 621.2,569.8 621.4,580.4 621.7,567.8 621.9,582.1 622.1,566.4 622.4,582.0 622.6,567.6 622.9,578.8 623.1,567.2 623.3,578.3 623.6,565.7 623.8,577.2 624.1,568.1 624.3,575.7 624.5,567.3 624.8,575.5 625.0,565.3 625.3,568.2 625.5,564.3 625.7,576.8 626.0,561.8 626.2,576.5 626.5,564.6 626.7,577.1 626.9,564.6 627.2,570.2 627.4,564.6 627.7,570.6 627.9,563.5 628.1,570.1 628.4,556.0 628.6,569.4 628.9,560.1 629.1,570.3 629.3,561.4 629.6,570.3 629.8,556.0 630.1,570.2 630.3,554.6 630.5,564.0 630.8,556.4 631.0,568.3 631.3,555.1 631.5,567.8 631.7,560.5 632.0,567.0 632.2,554.3 632.5,566.2 632.7,552.7 632.9,558.9 633.2,548.5 633.4,562.1 633.7,547.8 633.9,561.0 634.1,544.5 634.4,559.0 634.6,545.0 634.9,558.3 635.1,545.6 635.3,555.1 635.6,536.2 635.8,553.3 636.1,537.2 636.3,543.4 636.5,533.7 636.8,551.3 637.0,530.5 637.3,550.8 637.5,527.4 637.7,546.3 638.0,540.4 638.2,544.7 638.5,524.9 638.7,538.8 638.9,514.0 639.2,538.6 639.4,524.2 639.7,537.5 639.9,528.5 640.1,550.5 640.4,532.8 640.6,554.5 640.9,535.0 641.1,565.0 641.3,540.1 641.6,568.7 641.8,546.9 642.1,566.9 642.3,551.8 642.5,577.9 642.8,551.6 643.0,581.5 643.3,553.1 643.5,574.2 643.7,565.0 644.0,575.9 644.2,549.6 644.5,578.9 644.7,549.7 644.9,581.2 645.2,554.6 645.4,581.4 645.7,550.1 645.9,586.8 646.1,550.8 646.4,587.8 646.6,553.6 646.9,579.4 647.1,554.0 647.3,583.6 647.6,552.2 647.8,583.9 648.1,556.9 648.3,584.0 648.5,558.8 648.8,585.2 649.0,563.2 649.3,579.9 649.5,554.7 649.7,581.5 650.0,551.9 650.2,581.7 650.5,555.2 650.7,584.1 650.9,554.1 651.2,584.1 651.4,560.9 651.7,581.7 651.9,559.9 652.1,569.4 652.4,575.1 652.6,581.3 652.9,557.7 653.1,586.5 653.3,557.4 653.6,586.1 653.8,560.4 654.1,580.7 654.3,560.7 654.5,589.4 654.8,555.9 655.0,589.1 655.3,555.3 655.5,579.6 655.7,555.7 656.0,581.5 656.2,556.1 656.5,580.8 656.7,552.2 656.9,577.1 657.2,557.1 657.4,567.6 657.7,554.2 657.9,572.2 658.1,552.3 658.4,570.0 658.6,545.4 658.9,572.0 659.1,554.6 659.3,548.6 659.6,543.9 659.8,566.4 660.1,539.9 660.3,559.3 660.5,537.8 660.8,556.3 661.0,535.6 661.3,557.8 661.5,533.2 661.7,553.8 662.0,531.3 662.2,549.0 662.5,530.0 662.7,551.6 662.9,527.1 663.2,548.8 663.4,522.6 663.7,547.5 663.9,522.1 664.1,550.7 664.4,520.9 664.6,547.5 664.9,515.8 665.1,539.3 665.3,514.9 665.6,536.6 665.8,521.6 666.1,532.9 666.3,508.9 666.5,528.3 666.8,504.7 667.0,524.7 667.3,503.5 667.5,527.2 667.7,502.2 668.0,523.4 668.2,502.4 668.5,519.4 668.7,499.3 668.9,520.1 669.2,491.6 669.4,516.9 669.7,490.9 669.9,505.8 670.1,594.5 670.4,499.3 670.6,500.4 670.9,516.4 671.1,492.7 671.3,515.9 671.6,492.0 671.8,518.6 672.1,500.5 672.3,517.6 672.5,511.6 672.8,513.8 673.0,498.7 673.3,526.4 673.5,498.5 673.7,520.5 674.0,498.4 674.2,517.4 674.5,506.0 674.7,531.0 674.9,506.5 675.2,532.8 675.4,499.4 675.7,527.2 675.9,497.8 676.1,529.0 676.4,492.8 676.6,528.4 676.9,498.4 677.1,518.0 677.3,498.7 677.6,526.7 677.8,501.2 678.1,531.9 678.3,501.0 678.5,529.1 678.8,499.0 679.0,517.1 679.3,497.6 679.5,526.7 679.7,497.2 680.0,526.3 680.2,500.7 680.5,534.3 680.7,502.9 680.9,528.7 681.2,503.9 681.4,530.6 681.7,513.0 681.9,539.3 682.1,515.4 682.4,529.6 682.6,518.4 682.9,545.6 683.1,528.3 683.3,551.2 683.6,538.2 683.8,561.1 684.1,555.7 684.3,576.2 684.5,572.0"/></g>
<text x="317" y="187" letter-spacing="0">RBSP-A/E</text>
<text x="295" y="414" letter-spacing="0.25">RBSP-A/ect-</text>
<text x="173.2" y="283" letter-spacing="1">10</text>
<text x="193.4" y="275">5</text>
<text x="173.2" y="384" letter-spacing="1">10</text>
<text x="193.4" y="376">4</text>
<text x="0" y="0" text-anchor="middle" transform="translate(161.300 287.700) rotate(-90)">Hz</text>
<text x="0" y="0" text-anchor="middle" textLength="103" lengthAdjust="spacing" transform="translate(805 288) rotate(-90)">V^2/m^2/Hz</text>
<text x="0" y="0" text-anchor="middle" letter-spacing="0.42" transform="translate(166.300 531.400) rotate(-90)">e Tperp/Tpar</text>
<text x="735.9" y="226.6" letter-spacing="1.5">10</text>
<text x="757.2" y="218.7" letter-spacing="0.75">-10</text>
<text x="735.9" y="253.27" letter-spacing="1.5">10</text>
<text x="757.2" y="245.37" letter-spacing="0.75">-12</text>
<text x="735.9" y="279.94" letter-spacing="1.5">10</text>
<text x="757.2" y="272.04" letter-spacing="0.75">-14</text>
<text x="735.9" y="306.61" letter-spacing="1.5">10</text>
<text x="757.2" y="298.71" letter-spacing="0.75">-16</text>
<text x="735.9" y="333.28" letter-spacing="1.5">10</text>
<text x="757.2" y="325.38" letter-spacing="0.75">-18</text>
<text x="735.9" y="359.95" letter-spacing="1.5">10</text>
<text x="757.2" y="352.05" letter-spacing="0.75">-20</text>
<text x="735.9" y="386.62" letter-spacing="1.5">10</text>
<text x="757.2" y="378.72" letter-spacing="0.75">-22</text>
<text x="216.4" y="408.6" letter-spacing="1">00:00</text>
<text x="648.1" y="408.6" letter-spacing="1">00:00</text>
<text x="216.4" y="424.5" letter-spacing="1">2012-12-02</text>
<text x="648.1" y="424.5" letter-spacing="1">2012-12-03</text>
<text x="202.7" y="457" text-anchor="end" letter-spacing="1">2.2</text>
<text x="202.7" y="481" text-anchor="end" letter-spacing="1">2.0</text>
<text x="202.7" y="506" text-anchor="end" letter-spacing="1">1.8</text>
<text x="202.7" y="535" text-anchor="end" letter-spacing="1">1.6</text>
<text x="202.7" y="568" text-anchor="end" letter-spacing="1">1.4</text>
<text x="202.7" y="605" text-anchor="end" letter-spacing="1">1.2</text>
<text x="262" y="653" text-anchor="end" letter-spacing="1">00:00</text>
<text x="262" y="673" text-anchor="end" letter-spacing="1">4.225</text>
<text x="262" y="693" text-anchor="end" letter-spacing="1">-10.580</text>
<text x="262" y="713" text-anchor="end" letter-spacing="1">2.247</text>
<text x="262" y="733" text-anchor="end" letter-spacing="1">4.373</text>
<text x="478.2" y="653" text-anchor="end" letter-spacing="1">12:00</text>
<text x="478.2" y="673" text-anchor="end" letter-spacing="1">5.756</text>
<text x="478.2" y="693" text-anchor="end" letter-spacing="1">-1.544</text>
<text x="478.2" y="713" text-anchor="end" letter-spacing="1">5.398</text>
<text x="478.2" y="733" text-anchor="end" letter-spacing="1">5.760</text>
<text x="694.2" y="653" text-anchor="end" letter-spacing="1">00:00</text>
<text x="694.2" y="673" text-anchor="end" letter-spacing="1">3.179</text>
<text x="694.2" y="693" text-anchor="end" letter-spacing="1">-16.190</text>
<text x="694.2" y="713" text-anchor="end" letter-spacing="1">8.125</text>
<text x="694.2" y="733" text-anchor="end" letter-spacing="1">3.447</text>
<text x="157.4" y="673">R</text><text x="168.2" y="678" font-size="10" font-weight="bold">E</text>
<text x="174.8" y="693" text-anchor="end" letter-spacing="0.4">MLat</text>
<text x="174.8" y="713" text-anchor="end" letter-spacing="0.4">MLT</text>
<text x="174.4" y="733" text-anchor="end">L</text>
<text x="453.8" y="757" text-anchor="middle" textLength="405" lengthAdjust="spacing">2012-12-01 (336) 23:00 to 2012-12-03 (338) 01:00</text>
</svg>
<div class="a" style="left:388px;top:59px;width:279px;height:367px;background:#eee;border:1px solid #6382bf;box-shadow:inset 1px 1px 0 #fff"></div>
<div class="a" style="left:389px;top:81px;width:277px;height:2px;background:#fff;border-top:1px solid #6382bf"></div>
<div class="a" style="left:389px;top:141px;width:277px;height:2px;background:#fff;border-top:1px solid #6382bf"></div>
<div class="a" style="left:389px;top:182px;width:277px;height:2px;background:#fff;border-top:1px solid #6382bf"></div>
<div class="a" style="left:389px;top:262px;width:277px;height:2px;background:#fff;border-top:1px solid #6382bf"></div>
<div class="a" style="left:389px;top:305px;width:277px;height:2px;background:#fff;border-top:1px solid #6382bf"></div>
<div class="a" style="left:389px;top:327px;width:277px;height:2px;background:#fff;border-top:1px solid #6382bf"></div>
<div class="a" style="left:389px;top:102px;width:277px;height:19px;background:#a3b8cc;border-top:1px solid #6382bf;border-bottom:1px solid #fff"></div>
<div class="a b" style="left:415.300px;top:65px;letter-spacing:0.31px">Cache</div>
<div class="a b" style="left:415.300px;top:86px;letter-spacing:0.29px">PNG Walk Viewer</div>
<div class="a b" style="left:415.300px;top:105px;letter-spacing:0.33px">Create PNG Walk...</div>
<div class="a b" style="left:415.300px;top:124px;letter-spacing:0.21px">Run Batch...</div>
<div class="a b" style="left:415.300px;top:147px;letter-spacing:0.16px">Events List</div>
<div class="a b" style="left:415.300px;top:166px;letter-spacing:0.13px">Fix Layout</div>
<div class="a b" style="left:415.300px;top:187px;letter-spacing:0.39px">Aggregate...</div>
<div class="a b" style="left:415.300px;top:206px;letter-spacing:0.24px">Replace File...</div>
<div class="a b" style="left:415.300px;top:225px;letter-spacing:0.4px">Mash Data...</div>
<div class="a b" style="left:415.300px;top:245px;letter-spacing:0.34px">Additional Operations...</div>
<div class="a b" style="left:415.300px;top:267px;letter-spacing:0.21px">Decode URL</div>
<div class="a b" style="left:415.300px;top:287px;letter-spacing:0.23px">Reload All Data</div>
<div class="a b" style="left:415.300px;top:311px;letter-spacing:0.48px">Manage and Browse Tools...</div>
<div class="a b" style="left:415.300px;top:332px;letter-spacing:0.37px">Create Screen Shot</div>
<div class="a b" style="left:415.300px;top:351px;letter-spacing:0.29px">Start SAMP Hub and Listener</div>
<div class="a b" style="left:415.300px;top:370px;letter-spacing:0.4px">startScreenShots.jy</div>
<div class="a b" style="left:415.300px;top:389px;letter-spacing:0.32px">updateAutoplot.jy</div>
<div class="a b" style="left:415.300px;top:408px;letter-spacing:0.1px">realTime.jy</div>
<div class="a" style="left:560px;width:92px;text-align:right;top:167px;font-size:10px;line-height:12px;color:#6382bf;letter-spacing:.1px">Ctrl-F</div>
<div class="a" style="left:560px;width:92px;text-align:right;top:288px;font-size:10px;line-height:12px;color:#6382bf;letter-spacing:.1px">Ctrl-L</div>
<svg class="a" style="left:654px;top:65px" width="8" height="12"><path d="M2 2v8.500l4.300-4.250z" fill="#333"/></svg>
<svg class="a" style="left:395px;top:243px" width="16" height="16" viewBox="0 0 16 16"><defs><radialGradient id="mg" cx=".4" cy=".35" r=".7"><stop offset="0" stop-color="#e2effd"/><stop offset="1" stop-color="#8dbbf0"/></radialGradient></defs><path d="M2 1v13.800M7.200 1v13.800M12 1v13.800" stroke="#484848" stroke-width="2" fill="none"/><path d="M7.200 8.800h4.800" stroke="#484848" stroke-width="1.300"/><path d="M8 9.200l-5.600 4.600" stroke="#f29a1e" stroke-width="1.700" stroke-linecap="round"/><path d="M3.600 12.800l-1.400 1.200" stroke="#e0452a" stroke-width="1.500" stroke-linecap="round"/><circle cx="10" cy="6.800" r="3.300" fill="url(#mg)" stroke="#9dbde4" stroke-width=".9"/></svg>
<svg class="a" style="left:395px;top:285px" width="16" height="16" viewBox="0 0 16 16"><path d="M12.700 9.200A5 5 0 1 1 10.200 3.600" fill="none" stroke="#5b93d4" stroke-width="4"/><path d="M8.300 .8L15.700 .4L15.300 7.800z" fill="#5b93d4"/><path d="M12.700 9.200A5 5 0 1 1 10.200 3.600" fill="none" stroke="#7fb0e6" stroke-width="1.600"/></svg>
<svg class="a" style="left:436px;top:108px" width="40" height="54"><defs><linearGradient id="cg" x1="0" y1="0" x2="1" y2="1"><stop offset="0" stop-color="#fff"/><stop offset=".55" stop-color="#fbfbfb"/><stop offset="1" stop-color="#c9c9c9"/></linearGradient></defs><path d="M5.4 4.6L5.4 33.8L14.3 27.3L25.3 47.2L33.5 43.2L23.6 24.6L31.8 20.6z" fill="url(#cg)" stroke="#111" stroke-width="3.400" stroke-linejoin="round"/></svg>
</body></html>
